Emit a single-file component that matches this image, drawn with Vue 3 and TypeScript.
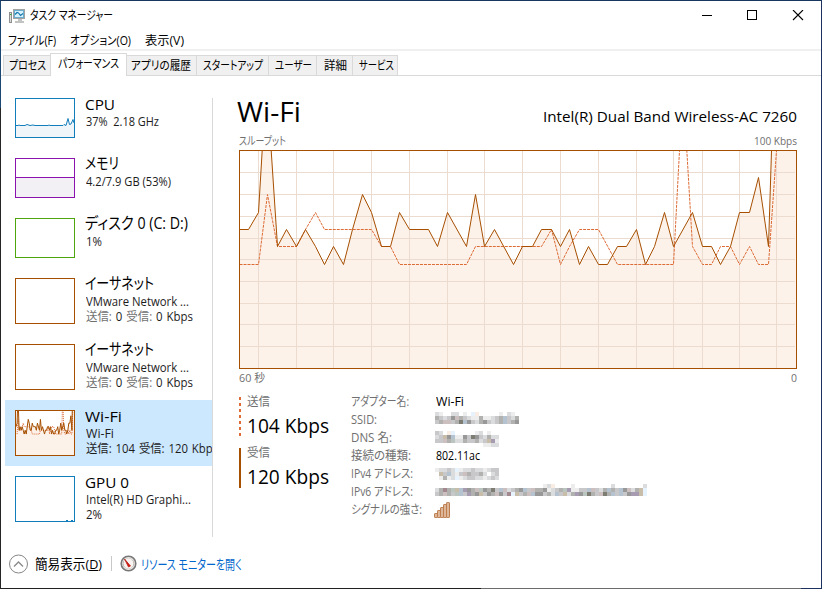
<script setup lang="ts">
import type { Directive } from 'vue'

// Condenses or widens a label so that it takes exactly the given number of pixels.
const vFit: Directive<HTMLElement, number> = {
  mounted(el, { value }) {
    const natural = el.getBoundingClientRect().width
    el.style.transform = `scaleX(${value / natural})`
    el.style.marginRight = `${value - natural}px`
  },
}

const menus = [
  { label: 'ファイル(F)', w: 48 },
  { label: 'オプション(O)', w: 61 },
  { label: '表示(V)', w: 39 },
]

const tabs = [
  { label: 'プロセス', w: 37, cls: 't-process' },
  { label: 'パフォーマンス', w: 61, cls: 't-perf active' },
  { label: 'アプリの履歴', w: 60, cls: 't-history' },
  { label: 'スタートアップ', w: 60, cls: 't-startup' },
  { label: 'ユーザー', w: 37, cls: 't-users' },
  { label: '詳細', w: 23, cls: 't-details' },
  { label: 'サービス', w: 35, cls: 't-services' },
]

interface Line { text: string; w: number }
interface Item { kind: string; title: string; w: number; lines: Line[]; net?: { send: string; recv: string; w: number } }

const items: Item[] = [
  { kind: 'cpu', title: 'CPU', w: 30, lines: [{ text: '37%\u00a0 2.18 GHz', w: 73 }] },
  { kind: 'mem', title: 'メモリ', w: 34, lines: [{ text: '4.2/7.9 GB (53%)', w: 85 }] },
  { kind: 'disk', title: 'ディスク 0 (C: D:)', w: 103, lines: [{ text: '1%', w: 16 }] },
  { kind: 'eth tall', title: 'イーサネット', w: 69, lines: [{ text: 'VMware Network ...', w: 103 }], net: { send: '0', recv: '0 Kbps', w: 107 } },
  { kind: 'eth tall', title: 'イーサネット', w: 69, lines: [{ text: 'VMware Network ...', w: 103 }], net: { send: '0', recv: '0 Kbps', w: 107 } },
  { kind: 'wifi tall selected', title: 'Wi-Fi', w: 37, lines: [{ text: 'Wi-Fi', w: 28 }], net: { send: '104', recv: '120 Kbps', w: 132 } },
  { kind: 'gpu tall', title: 'GPU 0', w: 44, lines: [{ text: 'Intel(R) HD Graphi...', w: 105 }, { text: '2%', w: 16 }] },
]

const gridX = [258.5, 296.5, 333.5, 371.5, 409.5, 447.5, 484.5, 522.5, 560.5, 598.5, 636.5, 673.5, 702.5, 739.5, 776.5]
const gridY = [172.5, 194.5, 216.5, 238.5, 259.5, 281.5, 303.5, 324.5, 346.5]

// Heights of the plotted levels; index 6 lies on the top edge.
const level = [264.5, 246.5, 229.5, 212.5, 194.5, 177.5, 150.5]
const path = (pts: [number, number][]) => pts.map(([x, l]) => `${x},${level[l]}`).join(' ')

const received = path([
  [239.5, 2], [248.5, 2], [258.5, 3], [262.2, 6], [271.2, 6], [277.5, 1], [286.5, 2], [296.5, 1], [305.5, 2], [315.5, 1],
  [324.5, 0], [333.5, 1], [343.5, 0], [352.5, 2], [362.5, 4], [371.5, 3], [381.5, 1], [390.5, 1], [399.5, 3], [409.5, 2],
  [428.5, 2], [437.5, 1], [447.5, 3], [466.5, 1], [475.5, 4], [484.5, 1], [494.5, 2], [513.5, 0], [522.5, 1], [532.5, 1],
  [541.5, 2], [551.5, 2], [560.5, 1], [569.5, 2], [579.5, 0], [588.5, 1], [598.5, 0], [607.5, 0], [617.5, 1], [626.5, 1],
  [636.5, 2], [645.5, 0], [654.5, 1], [664.5, 3], [673.5, 1], [692.5, 3], [702.5, 1], [711.5, 1], [720.5, 0], [730.5, 1],
  [739.5, 3], [749.5, 3], [758.5, 5], [768.5, 1], [771.5, 6], [796.5, 6],
])
const sent = path([
  [239.5, 0], [258.5, 0], [267.5, 4], [277.5, 1], [296.5, 1], [305.5, 2], [315.5, 3], [324.5, 2], [371.5, 2], [381.5, 1],
  [390.5, 1], [399.5, 0], [466.5, 0], [475.5, 1], [541.5, 1], [551.5, 2], [560.5, 0], [569.5, 1], [579.5, 2], [598.5, 2],
  [617.5, 0], [673.5, 0], [679.5, 6], [686.8, 6], [692.5, 1], [702.5, 0], [711.5, 0], [720.5, 1], [730.5, 1], [739.5, 0],
  [749.5, 1], [758.5, 0], [768.5, 0], [776.5, 6],
])
const area = `239.5,368.5 ${received} 796.5,368.5`

const shades: Record<string, string> = {
  a: '#ededee', b: '#dbdcdd', c: '#c8c8ca', d: '#b1b1b0', e: '#999898', f: '#7d7d73', g: '#ccbfbf',
  h: '#c8bda9', i: '#b5c2cf', j: '#a69bb1', k: '#e6f2fd', l: '#f9ece3', m: '#bac5bf', n: '#a3898f',
}
const mosaic = (rows: string[]) =>
  rows.flatMap((row, y) => [...row].map((c, x) => ({ x: x * 4, y: y * 4, fill: shades[c] })).filter((p) => p.fill))

const details = [
  { label: 'アダプター名:', w: 58, value: 'Wi-Fi', vw: 28 },
  { label: 'SSID:', w: 26, cells: mosaic(['ba..bb.a.kl.....a.ba.', 'dcbcegdcbaadaabcdicbd', 'cdggcdfiecbdecbcdicde']) },
  { label: 'DNS 名:', w: 41, cells: mosaic(['cb.lk.....ab.a..', 'bcheiaaecfecbdbb', 'ccgdmbbdccdbchja', '............aabb']) },
  { label: '接続の種類:', w: 60, value: '802.11ac', vw: 44 },
  { label: 'IPv4 アドレス:', w: 62, cells: mosaic(['abbcbkabbcbbabcc', '.hcibacgdccdb.bc', '.adabkabccbbabcb']) },
  { label: 'IPv6 アドレス:', w: 62, cells: mosaic([
    '...........................abl....a.........b.......b',
    'bdndmhijedgmedfcigbcdeicgddeabcdmjaaccigcbdidciegbdhk',
    'cdgdcmicjdehcedgecnkhcdgieecdbichbdjemfdcgfdicicejjhk',
  ]) },
  { label: 'シグナルの強さ:', w: 71, signal: true },
]
</script>

<template>
  <div class="window">
    <header class="titlebar">
      <svg class="app-icon" width="17" height="16" viewBox="0 0 17 16">
        <rect x=".5" y="4.5" width="2" height="10" fill="#dededc" stroke="#8f8f8f" />
        <path d="M1 6.5h1.500" stroke="#3aa33a" />
        <rect x="4.5" y="1.5" width="11" height="9" fill="#f4f4f4" stroke="#a2a2a2" />
        <rect x="5.5" y="2.5" width="9" height="7" fill="#d9f1fb" stroke="#6caed0" />
        <path d="M6 6.500l2-2 1.500.5 2 2.500 2.500-2" fill="none" stroke="#1479ad" stroke-width="1.200" />
        <path d="M9 12h4M6 14h9" stroke="#b0b0b0" stroke-width="1.500" />
      </svg>
      <span v-fit="83" class="fit caption">タスク マネージャー</span>
      <svg class="controls" width="102" height="12" viewBox="0 0 102 12" shape-rendering="crispEdges">
        <path d="M0 5.500h10" stroke="#000" />
        <rect x="45.500" y=".5" width="9" height="9" fill="none" stroke="#000" />
        <path d="M91 0l10 10M101 0l-10 10" stroke="#000" stroke-width="1.100" shape-rendering="auto" />
      </svg>
    </header>

    <nav class="menubar">
      <span v-for="m in menus" :key="m.label" v-fit="m.w" class="fit">{{ m.label }}</span>
    </nav>

    <nav class="tabs">
      <div v-for="t in tabs" :key="t.label" class="tab" :class="t.cls">
        <span v-fit="t.w" class="fit">{{ t.label }}</span>
      </div>
    </nav>

    <div class="body">
      <aside class="sidebar">
        <div v-for="(it, i) in items" :key="i" class="item" :class="it.kind">
          <svg class="thumb" width="60" :height="it.kind.includes('tall') ? 46 : 40">
            <template v-if="it.kind === 'cpu'">
              <path d="M0 27.500H3L4 27 5 27.500H10L12 26.500 15 27.500 18 27 20 27.500H33L34 27 35 27.500H48L49 26.500 51 27.500 53 21 54 26 56 26 58 22 59 26V40H0Z" fill="#f0f5fa" />
              <path d="M0 27.500H3L4 27 5 27.500H10L12 26.500 15 27.500 18 27 20 27.500H33L34 27 35 27.500H48L49 26.500 51 27.500 53 20.500 54.500 26.500 56 26 58 21.500 59 25" fill="none" stroke="#117dbb" />
            </template>
            <template v-else-if="it.kind === 'mem'">
              <rect y="19" width="60" height="21" fill="#f3f0f5" />
              <path d="M0 19.500H60" stroke="#8b12ae" />
            </template>
            <template v-else-if="it.kind.startsWith('wifi')">
              <rect width="60" height="46" fill="#fff" />
              <svg width="60" height="46" viewBox="239 150 558 219" preserveAspectRatio="none">
                <polygon :points="area" fill="#fcf2ea" />
                <polyline :points="sent" class="sent thin" />
                <polyline :points="received" class="received thin" />
              </svg>
            </template>
            <path v-else-if="it.kind.startsWith('gpu')" d="M51 44.500h2M56 44.500h2" stroke="#117dbb" />
            <rect class="frame" x=".5" y=".5" width="59" :height="it.kind.includes('tall') ? 45 : 39" />
          </svg>
          <div class="texts">
            <div class="title"><span v-fit="it.w" class="fit">{{ it.title }}</span></div>
            <div v-for="l in it.lines" :key="l.text" class="line"><span v-fit="l.w" class="fit">{{ l.text }}</span></div>
            <div v-if="it.net" class="line net">
              <span v-fit="it.net.w" class="fit"><i>送信:</i> {{ it.net.send }} <i>受信:</i> {{ it.net.recv }}</span>
            </div>
          </div>
        </div>
      </aside>

      <main class="main">
        <div class="heading">
          <span v-fit="64" class="fit name">Wi-Fi</span>
          <span v-fit="254" class="fit adapter">Intel(R) Dual Band Wireless-AC 7260</span>
        </div>
        <div class="axis">
          <span v-fit="47" class="fit">スループット</span>
          <span v-fit="43" class="fit">100 Kbps</span>
        </div>
        <svg class="chart" width="558" height="219" viewBox="239 150 558 219">
          <polygon :points="area" fill="#fcf2ea" />
          <g stroke="#ecdccf">
            <path v-for="x in gridX" :key="x" :d="`M${x} 151V368`" />
            <path v-for="y in gridY" :key="y" :d="`M240 ${y}H795`" />
          </g>
          <polyline :points="sent" class="sent" />
          <polyline :points="received" class="received" />
          <rect x="239.5" y="150.5" width="557" height="218" fill="none" stroke="#a74f01" />
        </svg>
        <div class="axis bottom">
          <span v-fit="26" class="fit">60 秒</span>
          <span v-fit="6" class="fit">0</span>
        </div>

        <div class="info">
          <div class="rates">
            <div class="rate out">
              <div class="rate-label"><span v-fit="23" class="fit">送信</span></div>
              <div class="rate-value"><span v-fit="82" class="fit">104 Kbps</span></div>
            </div>
            <div class="rate in">
              <div class="rate-label"><span v-fit="23" class="fit">受信</span></div>
              <div class="rate-value"><span v-fit="82" class="fit">120 Kbps</span></div>
            </div>
          </div>
          <div class="details">
            <div v-for="d in details" :key="d.label" class="detail">
              <div class="key"><span v-fit="d.w" class="fit">{{ d.label }}</span></div>
              <span v-if="d.value" v-fit="d.vw" class="fit value">{{ d.value }}</span>
              <svg v-else-if="d.cells" class="mosaic" :class="{ raised: d.label === 'SSID:' || d.label.startsWith('IPv6'), dns: d.label.startsWith('DNS') }" width="212" height="16" shape-rendering="crispEdges">
                <rect v-for="(c, k) in d.cells" :key="k" :x="c.x" :y="c.y" width="4" height="4" :fill="c.fill" />
              </svg>
              <svg v-else class="signal" width="16" height="16" viewBox="0 0 16 16">
                <g fill="#deb698" stroke="#bd7d4f">
                  <rect x=".5" y="11.500" width="3" height="4" rx=".6" />
                  <rect x="3.500" y="8.500" width="3" height="7" rx=".6" />
                  <rect x="6.500" y="5.500" width="3" height="10" rx=".6" />
                  <rect x="9.500" y="2.500" width="3" height="13" rx=".6" />
                  <rect x="12.500" y=".5" width="3" height="15" rx=".6" />
                </g>
              </svg>
            </div>
          </div>
        </div>
      </main>
    </div>

    <footer class="footer">
      <svg class="chevron" width="20" height="20" viewBox="0 0 20 20">
        <circle cx="10.500" cy="10" r="9" fill="#fff" stroke="#868686" />
        <path d="M6 12.500L10.500 8 15 12.500" fill="none" stroke="#8a8a8a" stroke-width="1.300" />
      </svg>
      <span v-fit="67" class="fit fewer">簡易表示(<u>D</u>)</span>
      <span class="sep"></span>
      <svg class="gauge" width="17" height="17" viewBox="0 0 17 17">
        <circle cx="8.500" cy="8.500" r="7.300" fill="#f6f3f1" stroke="#777" stroke-width="1.600" />
        <circle cx="8.500" cy="8.500" r="5.400" fill="none" stroke="#d5cfcb" />
        <path d="M4 11.500a5.400 5.400 0 0 1 0-6M13 5.500a5.400 5.400 0 0 1 0 6" fill="none" stroke="#a29b96" stroke-dasharray="1 1" />
        <path d="M4.500 4l6 7-2 1z" fill="#d5190f" stroke="#b91d15" stroke-width=".8" />
      </svg>
      <span v-fit="101" class="fit link">リソース モニターを開く</span>
    </footer>
  </div>
</template>

<style>
body {
  overflow: hidden;
}
</style>

<style scoped>
.window {
  box-sizing: border-box;
  width: 822px;
  height: 589px;
  padding: 1px;
  display: flex;
  flex-direction: column;
  background:
    linear-gradient(#17375e, #17375e) 0 0 / 822px 1px no-repeat,
    linear-gradient(#1d4773 108px, #252525 108px) 0 0 / 1px 589px no-repeat,
    linear-gradient(#1c315f, #1c315f) 821px 0 / 1px 589px no-repeat,
    linear-gradient(90deg, #202020 481px, #6b6b6b 481px 801px, #1c315f 801px) 0 588px / 822px 1px no-repeat,
    #fff;
  color: #000;
  font: 12px 'Open Sans', 'Noto Sans CJK JP', sans-serif;
  font-feature-settings: 'palt';
}
.fit {
  display: inline-block;
  flex: none;
  white-space: nowrap;
  transform-origin: 0 50%;
}
.titlebar {
  height: 29px;
  flex: none;
  display: flex;
  align-items: center;
  padding: 0 17px 0 8px;
}
.app-icon {
  margin-right: 4px;
}
.caption {
  line-height: 18px;
}
.controls {
  margin-left: auto;
}
.menubar {
  height: 19px;
  flex: none;
  display: flex;
  align-items: center;
  gap: 14px;
  padding-left: 7px;
  border-bottom: 2px solid #f0f0f0;
}
.tabs {
  height: 25px;
  flex: none;
  display: flex;
  align-items: flex-end;
  padding-left: 2px;
  background: linear-gradient(#d9d9d9, #d9d9d9) 0 100% / 100% 1px no-repeat;
}
.tab {
  box-sizing: border-box;
  height: 21px;
  padding-left: 6px;
  background: #f0f0f0;
  border: 1px solid #d9d9d9;
  border-left-width: 0;
  line-height: 19px;
}
.tab .fit {
  height: 19px;
}
.t-process { width: 47px; border-left-width: 1px; padding-left: 5px; border-right: 0; }
.t-perf { width: 77px; }
.t-history { width: 70px; padding-left: 4px; }
.t-startup { width: 72px; }
.t-users { width: 48px; }
.t-details { width: 36px; padding-left: 7px; }
.t-services { width: 45px; }
.tab.active {
  height: 23px;
  background: #fff;
  border-left-width: 1px;
  border-bottom: 0;
  padding-left: 7px;
}
.body {
  height: 468px;
  flex: none;
  display: flex;
}
.sidebar {
  width: 208px;
  margin-left: 4px;
  padding-top: 12px;
  flex: none;
  background: linear-gradient(#d9d9d9, #d9d9d9) 207px 22px / 1px 439px no-repeat;
}
.item {
  box-sizing: border-box;
  width: 207px;
  height: 60px;
  padding: 10px 0 0 10px;
  display: flex;
  gap: 10px;
  overflow: hidden;
}
.item.tall {
  height: 66px;
}
.selected {
  background: #cce8ff;
}
.thumb {
  flex: none;
  overflow: hidden;
}
.frame {
  fill: none;
  stroke: #a74f01;
}
.cpu .frame, .gpu .frame { stroke: #117dbb; }
.mem .frame { stroke: #8b12ae; }
.disk .frame { stroke: #4da60c; }
.texts {
  min-width: 0;
  margin-top: -4px;
}
.title {
  height: 20px;
  font-size: 15px;
  line-height: 20px;
}
.mem .title, .disk .title, .eth .title {
  font-size: 15.5px;
  line-height: 19px;
}
.line {
  height: 15px;
  padding-left: 1px;
  line-height: 16px;
  color: #1c1c1c;
  white-space: nowrap;
}
.net .fit {
  word-spacing: 1px;
}
.line i {
  font-style: normal;
  color: #707070;
}
.selected .line i {
  color: #1c1c1c;
}
.main {
  width: 558px;
  margin-left: 26px;
}
.heading {
  height: 56px;
  box-sizing: border-box;
  padding-top: 16px;
  display: flex;
  justify-content: space-between;
  align-items: baseline;
}
.name {
  margin-left: -2px;
  font-size: 27.5px;
  line-height: 40px;
}
.adapter {
  font-size: 15px;
}
.axis {
  height: 18px;
  display: flex;
  justify-content: space-between;
  line-height: 18px;
  font-size: 11.5px;
  color: #707070;
}
.chart {
  display: block;
}
.sent {
  fill: none;
  stroke: #dd6b35;
  stroke-dasharray: 3 1;
}
.received {
  fill: none;
  stroke: #a74f01;
}
.thin {
  vector-effect: non-scaling-stroke;
}
.sent.thin {
  stroke-dasharray: 1 1;
}
.info {
  display: flex;
  padding-top: 6px;
}
.rates {
  width: 112px;
  padding-top: 4px;
}
.rate {
  height: 40px;
  padding-left: 8px;
  margin-bottom: 11px;
}
.out {
  background: repeating-linear-gradient(#dd6b35 0 3px, #fff 3px 6px) 0 0 / 2px 40px no-repeat;
}
.in {
  background: linear-gradient(#a74f01, #a74f01) 0 0 / 2px 40px no-repeat;
}
.rate-label {
  height: 10px;
  line-height: 10px;
  color: #707070;
}
.rate-value {
  height: 30px;
  font-size: 19.5px;
  line-height: 37px;
}
.detail {
  height: 18px;
  display: flex;
  line-height: 18px;
}
.key {
  width: 84px;
  flex: none;
  height: 18px;
  color: #707070;
}
.value {
  margin-left: 1px;
}
.mosaic {
  margin-top: 3px;
}
.mosaic.raised { margin-top: 1px; }
.mosaic.dns { margin-top: 2px; }
.signal {
  margin: 1px 0 0 -1px;
}
.footer {
  height: 38px;
  flex: none;
  display: flex;
  align-items: center;
  padding-left: 7px;
  font-size: 13px;
}
.chevron {
  margin-top: 1px;
}
.fewer {
  margin-left: 7px;
  font-size: 13.5px;
}
.fewer u {
  text-underline-offset: 1px;
}
.sep {
  width: 1px;
  height: 15px;
  margin-left: 9px;
  background: #c8c8c8;
}
.gauge {
  margin: 1px 4px 0 8px;
}
.link {
  color: #0066cc;
}
</style>
